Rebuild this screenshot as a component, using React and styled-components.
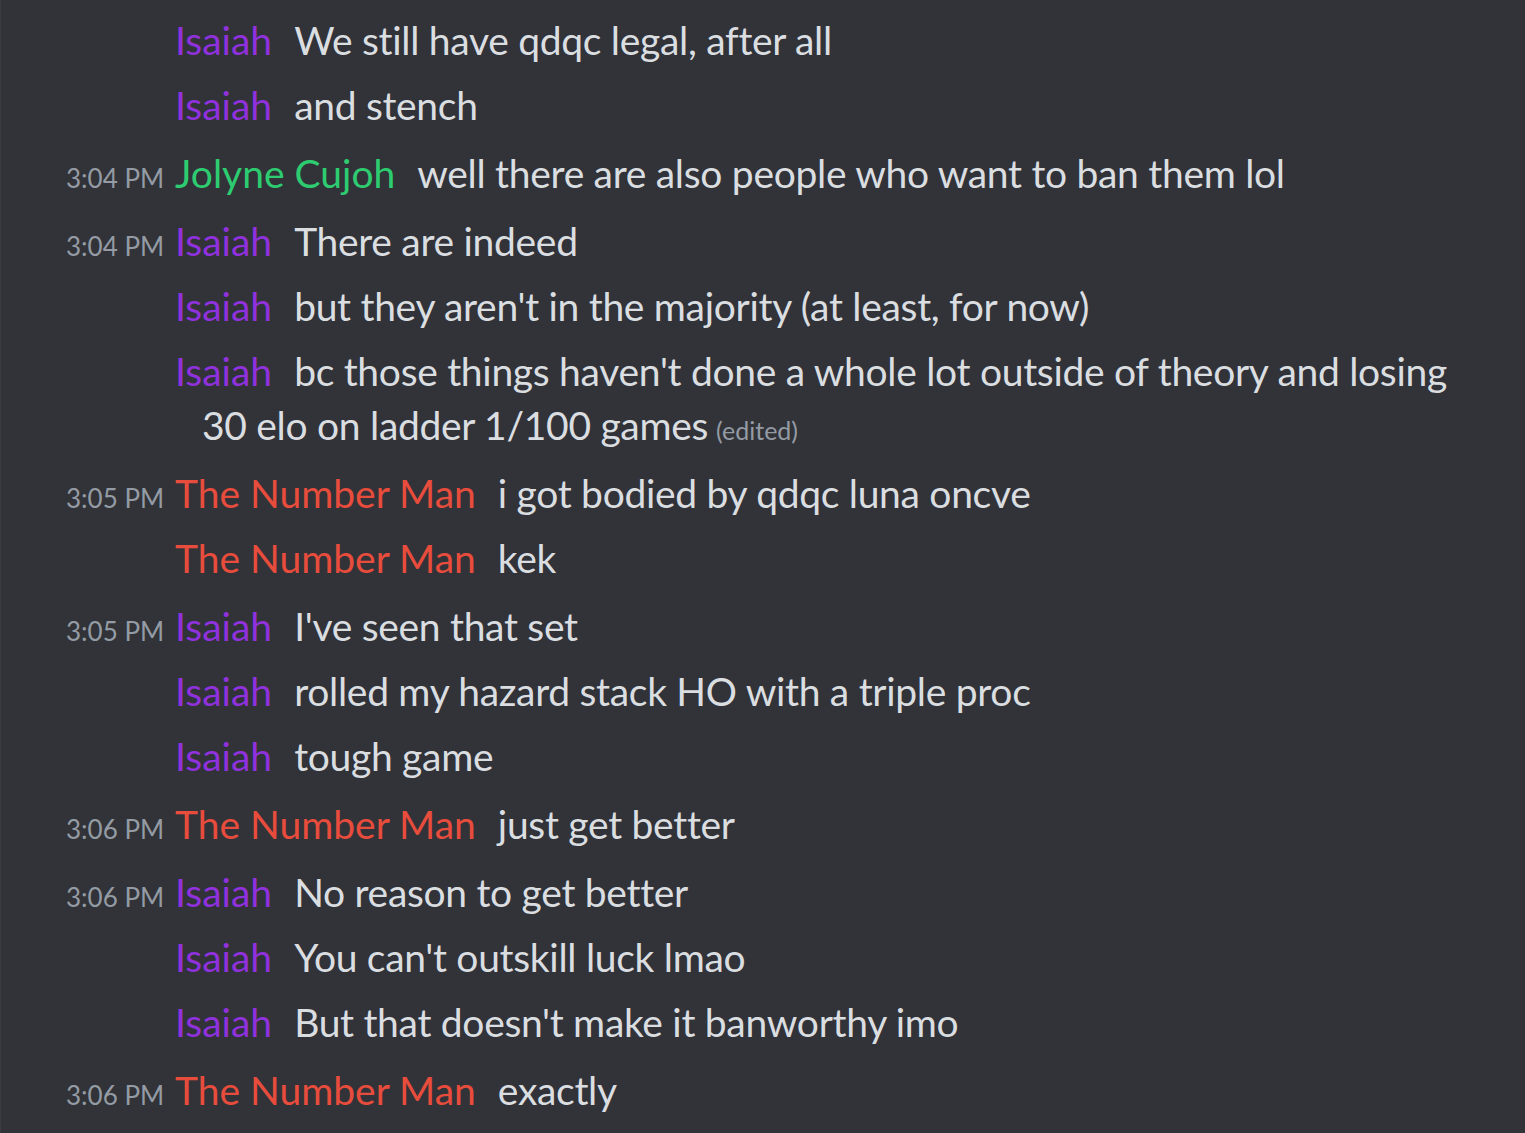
import React from 'react';
//Styling
import styled, {createGlobalStyle} from 'styled-components';

const users = {
  isaiah: {name: 'Isaiah', color: '#9031de'},
  jolyne: {name: 'Jolyne Cujoh', color: '#2ecc71'},
  number: {name: 'The Number Man', color: '#e74c3c'},
};

//Messages, a time marks the start of a group
const messages = [
  {user: 'isaiah', text: 'We still have qdqc legal, after all'},
  {user: 'isaiah', text: 'and stench'},
  {time: '3:04 PM', user: 'jolyne', text: 'well there are also people who want to ban them lol'},
  {time: '3:04 PM', user: 'isaiah', text: 'There are indeed'},
  {user: 'isaiah', text: "but they aren't in the majority (at least, for now)"},
  {user: 'isaiah', text: "bc those things haven't done a whole lot outside of theory and losing 30 elo on ladder 1/100 games", edited: true},
  {time: '3:05 PM', user: 'number', text: 'i got bodied by qdqc luna oncve'},
  {user: 'number', text: 'kek'},
  {time: '3:05 PM', user: 'isaiah', text: "I've seen that set"},
  {user: 'isaiah', text: 'rolled my hazard stack HO with a triple proc'},
  {user: 'isaiah', text: 'tough game'},
  {time: '3:06 PM', user: 'number', text: 'just get better'},
  {time: '3:06 PM', user: 'isaiah', text: 'No reason to get better'},
  {user: 'isaiah', text: "You can't outskill luck lmao"},
  {user: 'isaiah', text: "But that doesn't make it banworthy imo"},
  {time: '3:06 PM', user: 'number', text: 'exactly'},
];

const Chat = () => {
  return (
    <>
      <GlobalStyle/>
      <Log>
        {messages.map((m, i) => (
          <Message key={i} $groupStart={!!m.time}>
            <Timestamp>{m.time}</Timestamp>
            <Username $color={users[m.user].color}>{users[m.user].name}</Username>
            <Content>{m.text}</Content>
            {m.edited && <Edited>(edited)</Edited>}
          </Message>
        ))}
      </Log>
    </>
  );
}

const GlobalStyle = createGlobalStyle`
  html, body{
    margin: 0;
    background: #313338;
  }
`

const Log = styled.div`
  min-height: 100vh;
  box-sizing: border-box;
  padding: 8px 50px 0 0;
  border-left: 1px solid #3a3c42;
  font-family: Lato, "Noto Sans", sans-serif;
  color: #dbdee1;
`

const Message = styled.div`
  padding: 5px 0 6px 201px;
  margin-top: ${p => (p.$groupStart ? '3px' : '0')};
  text-indent: -136px;
  font-size: 39px;
  line-height: 54px;
`

const Timestamp = styled.span`
  display: inline-block;
  width: 109px;
  text-indent: 0;
  font-size: 26px;
  line-height: 1;
  color: #949ba4;
`

const Username = styled.span`
  color: ${p => p.$color};
  margin-right: 22px;
`

const Content = styled.span`
  color: #dbdee1;
  letter-spacing: -0.3px;
`

const Edited = styled.span`
  margin-left: 8px;
  font-size: 25px;
  line-height: 1;
  color: #949ba4;
`

export default Chat;
